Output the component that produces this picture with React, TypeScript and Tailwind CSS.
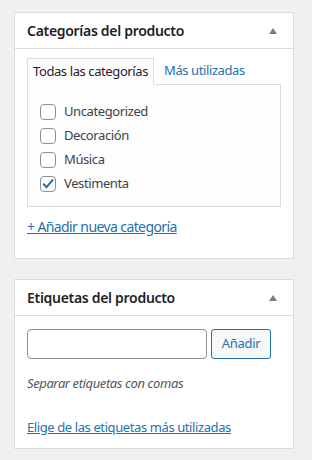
import React from "react";

const font = { fontFamily: '"Noto Sans", "Open Sans", sans-serif' };

function Arrow() {
  return (
    <svg width="8" height="6" viewBox="0 0 8 6" className="mr-[4px]">
      <polygon points="4,0 8,6 0,6" fill="#787c82" />
    </svg>
  );
}

function Check({ checked }: { checked?: boolean }) {
  return (
    <span className="w-[16px] h-[16px] rounded-[4px] border border-[#8c8f94] bg-white flex items-center justify-center shrink-0">
      {checked && (
        <svg width="14" height="14" viewBox="0 0 20 20">
          <path d="M4 10.5 L8 14.5 L16.5 4.5" fill="none" stroke="#2271b1" strokeWidth="3" strokeLinecap="round" strokeLinejoin="round" />
        </svg>
      )}
    </span>
  );
}

export default function App() {
  const cats = [
    { n: "Uncategorized" },
    { n: "Decoración" },
    { n: "Música" },
    { n: "Vestimenta", c: true },
  ];
  return (
    <div className="w-[312px] h-[460px] bg-[#f0f0f1] pt-[12px] px-[14px]" style={font}>
      <div className="w-[280px] bg-white border border-[#dcdcde]">
        <div className="h-[36px] border-b border-[#dcdcde] flex items-center justify-between pl-[12px] pr-[12px]">
          <span className="text-[14px] font-semibold text-[#1d2327] tracking-[-0.3px]">Categorías del producto</span>
          <Arrow />
        </div>
        <div className="px-[12px] pt-[8px] pb-[22px]">
          <div className="flex items-end h-[27px]">
            <div className="h-[27px] px-[5px] border border-[#dcdcde] border-b-0 bg-[#fdfdfd] text-[13px] text-[#1d2327] flex items-center relative top-[1px] z-10 tracking-[-0.4px]">
              Todas las categorías
            </div>
            <div className="h-[27px] px-[10px] text-[13px] text-[#2271b1] flex items-center tracking-[-0.4px]">
              Más utilizadas
            </div>
          </div>
          <div className="border border-[#dcdcde] bg-[#fdfdfd] pt-[19px] pb-[14px] pl-[12px] flex flex-col gap-[8px]">
            {cats.map((c) => (
              <label key={c.n} className="flex items-center gap-[8px] h-[16px] text-[13px] text-[#3c434a] tracking-[-0.4px]">
                <Check checked={c.c} />
                <span>{c.n}</span>
              </label>
            ))}
          </div>
          <div className="mt-[11px] text-[14px] text-[#2271b1] underline tracking-[-0.6px] leading-[18px]">
            + Añadir nueva categoría
          </div>
        </div>
      </div>

      <div className="w-[280px] bg-white border border-[#dcdcde] mt-[20px]">
        <div className="h-[36px] border-b border-[#dcdcde] flex items-center justify-between pl-[12px] pr-[12px]">
          <span className="text-[14px] font-semibold text-[#1d2327] tracking-[-0.3px]">Etiquetas del producto</span>
          <Arrow />
        </div>
        <div className="px-[12px] pt-[13px] pb-[12px]">
          <div className="flex gap-[4px]">
            <div className="w-[180px] h-[30px] rounded-[4px] border border-[#8c8f94] bg-white" />
            <div className="w-[60px] h-[30px] rounded-[3px] border border-[#2271b1] bg-[#f6f7f7] text-[13px] text-[#2271b1] flex items-center justify-center tracking-[-0.3px]">
              Añadir
            </div>
          </div>
          <div className="mt-[15px] text-[13px] italic text-[#50575e] leading-[18px] tracking-[-0.4px]">
            Separar etiquetas con comas
          </div>
          <div className="mt-[26px] text-[13px] text-[#2271b1] underline leading-[18px] tracking-[-0.4px]">
            Elige de las etiquetas más utilizadas
          </div>
        </div>
      </div>
    </div>
  );
}
